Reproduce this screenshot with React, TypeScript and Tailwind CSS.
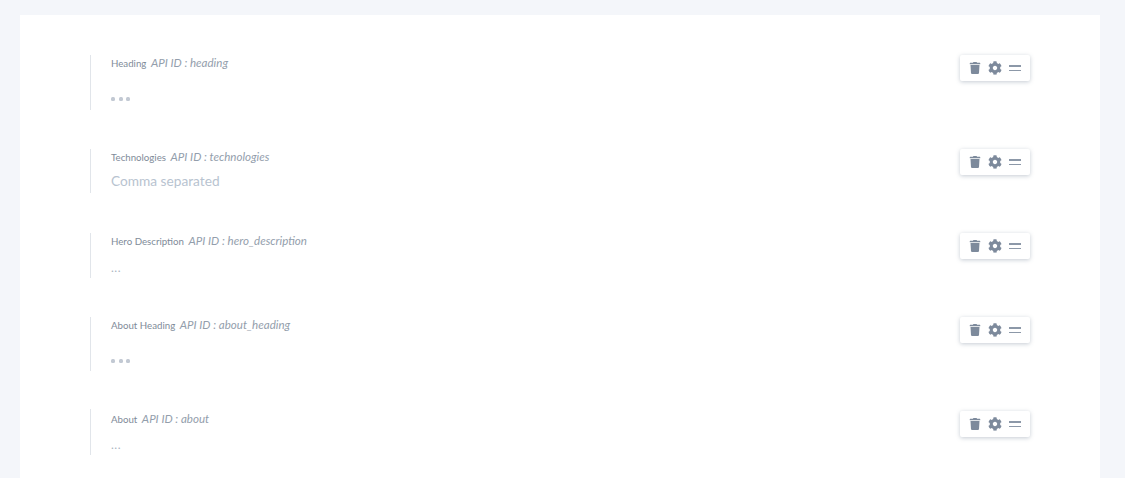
import { FaCog, FaTrash } from 'react-icons/fa'

const fields = [
  { label: 'Heading', id: 'heading', rowClass: 'h-[55px] mb-[39px]', bodyClass: '', kind: 'stars', hintClass: 'mt-[21px]' },
  { label: 'Technologies', id: 'technologies', rowClass: 'h-[44px] mb-[40px]', bodyClass: '', kind: 'comma', hintClass: 'mt-[3px]' },
  { label: 'Hero Description', id: 'hero_description', rowClass: 'h-[45px] mb-[39px]', bodyClass: '', kind: 'dots', hintClass: 'mt-[5px]' },
  { label: 'About Heading', id: 'about_heading', rowClass: 'h-[54px] mb-[38px]', bodyClass: '', kind: 'stars', hintClass: 'mt-[21px]' },
  { label: 'About', id: 'about', rowClass: 'h-[46px] mb-[20px]', bodyClass: 'pt-[2px]', kind: 'dots', hintClass: 'mt-[4px]' },
]

function Hint({ kind }: { kind: string }) {
  if (kind === 'comma') {
    return <span className="text-[13.7px] leading-[24px] text-[#b8c3d0]">Comma separated</span>
  }
  if (kind === 'stars') {
    return (
      <span className="flex h-[14px] items-center gap-[3.5px]">
        <i className="size-[4px] rounded-[1.5px] bg-[#c2c9d3]" />
        <i className="size-[4px] rounded-[1.5px] bg-[#c2c9d3]" />
        <i className="size-[4px] rounded-[1.5px] bg-[#c2c9d3]" />
      </span>
    )
  }
  return <span className="text-[12px] leading-[14px] tracking-[0.5px] text-[#a9b3c0]">...</span>
}

function Toolbar() {
  return (
    <div className="flex h-[26px] w-[70px] items-center justify-between rounded-[2px] bg-white pr-[9px] pl-[9px] text-[#7d8a9c] shadow-[0_1px_4px_rgba(90,105,130,0.35)]">
      <FaTrash className="size-[12px]" />
      <FaCog className="size-[14px]" />
      <span className="flex w-[12px] flex-col gap-[3px]">
        <i className="h-[1.5px] bg-[#8c98a8]" />
        <i className="h-[1.5px] bg-[#8c98a8]" />
      </span>
    </div>
  )
}

export default function App() {
  return (
    <div className="h-[478px] overflow-hidden bg-[#f4f6fa] pt-[15px] pr-[25px] pl-[20px] font-['Lato',sans-serif]">
      <div className="h-[463px] bg-white px-[70px] pt-[40px]">
        {fields.map((field) => (
          <div key={field.id} className={`flex items-start justify-between ${field.rowClass}`}>
            <div className={`h-full border-l border-[#e1e5ea] pl-[20px] ${field.bodyClass}`}>
              <div className="flex h-[16px] items-center gap-[4.5px]">
                <span className="text-[9.7px] text-[#808b99]">{field.label}</span>
                <span className="text-[11.55px] text-[#939eac] italic">API ID : {field.id}</span>
              </div>
              <div className={field.hintClass}>
                <Hint kind={field.kind} />
              </div>
            </div>
            <div className={field.bodyClass}>
              <Toolbar />
            </div>
          </div>
        ))}
      </div>
    </div>
  )
}
